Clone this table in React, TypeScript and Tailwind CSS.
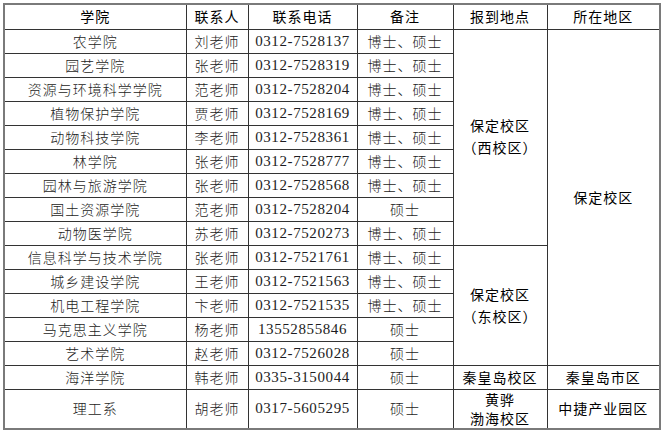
type Row = {
  college: string;
  contact: string;
  phone: string;
  note: string;
};

const rows: Row[] = [
  { college: '农学院', contact: '刘老师', phone: '0312-7528137', note: '博士、硕士' },
  { college: '园艺学院', contact: '张老师', phone: '0312-7528319', note: '博士、硕士' },
  { college: '资源与环境科学学院', contact: '范老师', phone: '0312-7528204', note: '博士、硕士' },
  { college: '植物保护学院', contact: '贾老师', phone: '0312-7528169', note: '博士、硕士' },
  { college: '动物科技学院', contact: '李老师', phone: '0312-7528361', note: '博士、硕士' },
  { college: '林学院', contact: '张老师', phone: '0312-7528777', note: '博士、硕士' },
  { college: '园林与旅游学院', contact: '张老师', phone: '0312-7528568', note: '博士、硕士' },
  { college: '国土资源学院', contact: '范老师', phone: '0312-7528204', note: '硕士' },
  { college: '动物医学院', contact: '苏老师', phone: '0312-7520273', note: '博士、硕士' },
  { college: '信息科学与技术学院', contact: '张老师', phone: '0312-7521761', note: '博士、硕士' },
  { college: '城乡建设学院', contact: '王老师', phone: '0312-7521563', note: '博士、硕士' },
  { college: '机电工程学院', contact: '卞老师', phone: '0312-7521535', note: '博士、硕士' },
  { college: '马克思主义学院', contact: '杨老师', phone: '13552855846', note: '硕士' },
  { college: '艺术学院', contact: '赵老师', phone: '0312-7526028', note: '硕士' },
  { college: '海洋学院', contact: '韩老师', phone: '0335-3150044', note: '硕士' },
];

const cjk = "font-['Noto_Sans_CJK_SC',sans-serif] font-light text-[14px] tracking-[1px]";
const num = "font-['Liberation_Serif','Noto_Sans_CJK_SC',serif] text-[15px] tracking-[0.6px]";
const cell = 'border border-[#333] text-center align-middle p-0 leading-[17px]';
const campus = "font-['Noto_Sans_CJK_SC',sans-serif] font-normal text-[14px] tracking-[1px] text-black";

export default function App() {
  return (
    <div className="w-[662px] h-[435px] bg-white pl-[3px] pt-[3px] text-[#1c1c22]">
      <table className="table-fixed border-collapse w-[656px] border-2 border-[#7a7a7a]">
        <colgroup>
          <col className="w-[182px]" />
          <col className="w-[62px]" />
          <col className="w-[109px]" />
          <col className="w-[96px]" />
          <col className="w-[94px]" />
          <col className="w-[113px]" />
        </colgroup>
        <thead>
          <tr className="h-[25px] text-black">
            {['学院', '联系人', '联系电话', '备注', '报到地点', '所在地区'].map((h) => (
              <th key={h} className={`${cell} ${cjk} font-normal`}>{h}</th>
            ))}
          </tr>
        </thead>
        <tbody>
          {rows.map((r, i) => (
            <tr key={r.college} className="h-[24px]">
              <td className={`${cell} ${cjk}`}>{r.college}</td>
              <td className={`${cell} ${cjk}`}>{r.contact}</td>
              <td className={`${cell} ${num}`}>{r.phone}</td>
              <td className={`${cell} ${cjk}`}>{r.note}</td>
              {i === 0 && (
                <td rowSpan={9} className={`${cell} ${campus} leading-[22px] pb-[2px]`}>
                  保定校区
                  <br />
                  （西校区）
                </td>
              )}
              {i === 9 && (
                <td rowSpan={5} className={`${cell} ${campus} leading-[22px]`}>
                  保定校区
                  <br />
                  （东校区）
                </td>
              )}
              {i === 0 && (
                <td rowSpan={14} className={`${cell} ${campus}`}>保定校区</td>
              )}
              {i === 14 && (
                <>
                  <td className={`${cell} ${campus}`}>秦皇岛校区</td>
                  <td className={`${cell} ${campus}`}>秦皇岛市区</td>
                </>
              )}
            </tr>
          ))}
          <tr className="h-[40px]">
            <td className={`${cell} ${cjk}`}>理工系</td>
            <td className={`${cell} ${cjk}`}>胡老师</td>
            <td className={`${cell} ${num}`}>0317-5605295</td>
            <td className={`${cell} ${cjk}`}>硕士</td>
            <td className={`${cell} ${campus} leading-[19px]`}>
              黄骅
              <br />
              渤海校区
            </td>
            <td className={`${cell} ${campus}`}>中捷产业园区</td>
          </tr>
        </tbody>
      </table>
    </div>
  );
}
